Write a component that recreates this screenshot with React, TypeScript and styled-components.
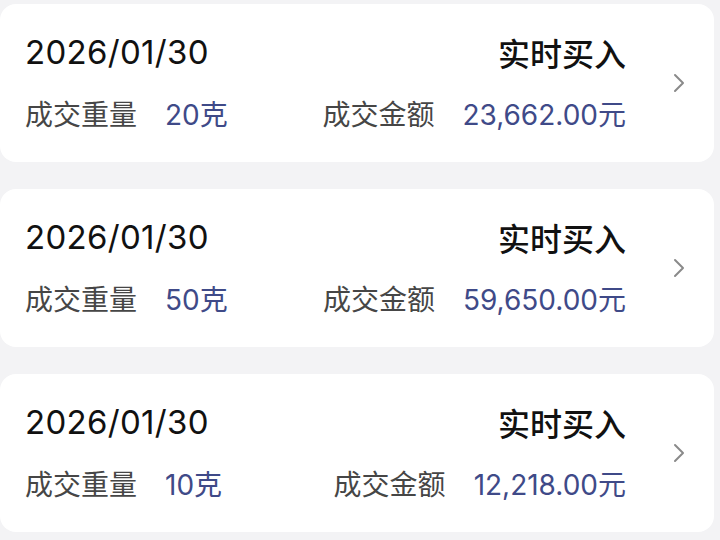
import styled, { createGlobalStyle } from 'styled-components'

const GlobalStyle = createGlobalStyle`
  html, body {
    margin: 0;
    padding: 0;
    background: #f3f3f5;
  }
  body {
    font-family: Inter, "Noto Sans CJK SC", sans-serif;
  }
`;

const List = styled.div`
  display: flex;
  flex-direction: column;
  gap: 27px;
  padding-top: 4px;
  width: 714px;
`;

const Card = styled.div`
  display: flex;
  align-items: stretch;
  height: 158px;
  background: #ffffff;
  border-radius: 16px;
`;

const Body = styled.div`
  flex: 1;
  display: flex;
  flex-direction: column;
  padding: 28px 0 0 25px;
`;

const TopRow = styled.div`
  display: flex;
  justify-content: space-between;
  align-items: center;
  height: 40px;
`;

const DateText = styled.div`
  font-size: 33px;
  letter-spacing: 0.3px;
  color: #111111;
`;

const TypeText = styled.div`
  font-family: "Noto Sans CJK SC", sans-serif;
  font-size: 32px;
  font-weight: 500;
  color: #111111;
`;

const BottomRow = styled.div`
  display: flex;
  justify-content: space-between;
  align-items: center;
  height: 36px;
  margin-top: 23px;
`;

const Field = styled.div`
  display: flex;
  align-items: center;
  gap: 28px;
`;

const Label = styled.span`
  font-family: "Noto Sans CJK SC", sans-serif;
  font-size: 28px;
  color: #464646;
`;

const Value = styled.span`
  font-size: 28px;
  color: #3f4a88;
`;

const ChevronArea = styled.div`
  width: 88px;
  display: flex;
  align-items: center;
  justify-content: center;
  padding-left: 18px;
  box-sizing: border-box;
`;

type Trade = { date: string; type: string; weight: string; amount: string }

const trades: Trade[] = [
  { date: '2026/01/30', type: '实时买入', weight: '20克', amount: '23,662.00元' },
  { date: '2026/01/30', type: '实时买入', weight: '50克', amount: '59,650.00元' },
  { date: '2026/01/30', type: '实时买入', weight: '10克', amount: '12,218.00元' },
]

function Chevron() {
  return (
    <svg width="14" height="20" viewBox="0 0 14 20">
      <polyline points="3,2 11,10 3,18" fill="none" stroke="#8a8a8a" strokeWidth="2" strokeLinecap="round" strokeLinejoin="round" />
    </svg>
  )
}

function App() {
  return (
    <>
      <GlobalStyle />
      <List>
        {trades.map((t, i) => (
          <Card key={i}>
            <Body>
              <TopRow>
                <DateText>{t.date}</DateText>
                <TypeText>{t.type}</TypeText>
              </TopRow>
              <BottomRow>
                <Field>
                  <Label>成交重量</Label>
                  <Value>{t.weight}</Value>
                </Field>
                <Field>
                  <Label>成交金额</Label>
                  <Value>{t.amount}</Value>
                </Field>
              </BottomRow>
            </Body>
            <ChevronArea>
              <Chevron />
            </ChevronArea>
          </Card>
        ))}
      </List>
    </>
  )
}

export default App
